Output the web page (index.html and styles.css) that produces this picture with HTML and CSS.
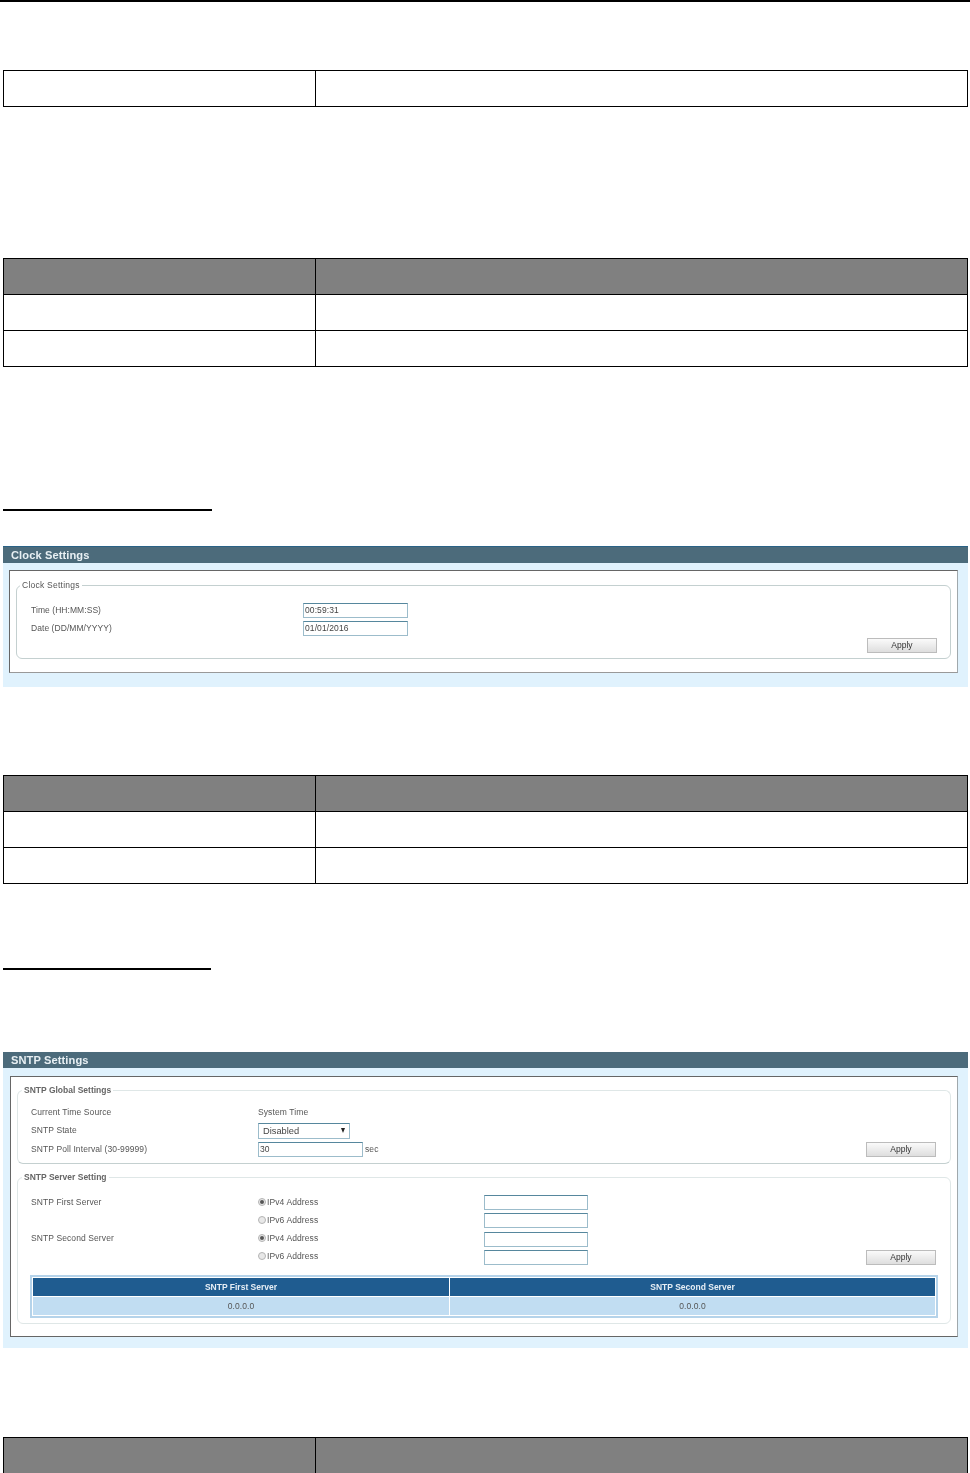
FILE: index.html
```html
<!DOCTYPE html>
<html lang="en">
<head>
<meta charset="utf-8">
<title>Clock and SNTP Settings</title>
<link rel="stylesheet" href="styles.css">
</head>
<body>
<div class="rule"></div>

<table class="doc doc-1"><tr><td class="c1"></td><td></td></tr></table>

<table class="doc doc-2">
  <tr class="head"><td class="c1"></td><td></td></tr>
  <tr><td class="c1"></td><td></td></tr>
  <tr><td class="c1"></td><td></td></tr>
</table>

<div class="underline ul-1"></div>

<section class="panel panel-clock">
  <h2 class="title">Clock Settings</h2>
  <div class="box">
    <div class="fs">
      <span class="legend">Clock Settings</span>
      <div class="clock-grid">
        <span>Time (HH:MM:SS)</span>
        <input class="field w105" value="00:59:31">
        <span>Date (DD/MM/YYYY)</span>
        <input class="field w105" value="01/01/2016">
        <button class="apply clock-apply">Apply</button>
      </div>
    </div>
  </div>
</section>

<table class="doc doc-3">
  <tr class="head"><td class="c1"></td><td></td></tr>
  <tr><td class="c1"></td><td></td></tr>
  <tr><td class="c1"></td><td></td></tr>
</table>

<div class="underline ul-2"></div>

<section class="panel panel-sntp">
  <h2 class="title">SNTP Settings</h2>
  <div class="box">
    <div class="fs fs-global">
      <span class="legend strong">SNTP Global Settings</span>
      <div class="global-grid">
        <span>Current Time Source</span>
        <span>System Time</span>
        <span></span>
        <span>SNTP State</span>
        <div class="select"><span>Disabled</span><i class="arrow"></i></div>
        <span></span>
        <span>SNTP Poll Interval (30-99999)</span>
        <div class="inline"><input class="field w105" value="30"><span>sec</span></div>
        <button class="apply">Apply</button>
      </div>
    </div>
    <div class="fs fs-server">
      <span class="legend strong">SNTP Server Setting</span>
      <div class="server-grid">
        <span>SNTP First Server</span>
        <label class="radio"><i class="dot on"></i>IPv4 Address</label>
        <input class="field w104">
        <span></span>
        <span></span>
        <label class="radio"><i class="dot"></i>IPv6 Address</label>
        <input class="field w104">
        <span></span>
        <span>SNTP Second Server</span>
        <label class="radio"><i class="dot on"></i>IPv4 Address</label>
        <input class="field w104">
        <span></span>
        <span></span>
        <label class="radio"><i class="dot"></i>IPv6 Address</label>
        <input class="field w104">
        <button class="apply">Apply</button>
      </div>
      <div class="servers-wrap">
        <table class="servers">
          <tr><th>SNTP First Server</th><th>SNTP Second Server</th></tr>
          <tr><td>0.0.0.0</td><td>0.0.0.0</td></tr>
        </table>
      </div>
    </div>
  </div>
</section>

<table class="doc doc-4"><tr class="head"><td class="c1"></td><td></td></tr></table>
</body>
</html>
```

FILE: styles.css
```css
* { box-sizing: border-box; }
html, body { margin: 0; padding: 0; background: #fff; }
body {
  width: 970px;
  height: 1473px;
  overflow: hidden;
  padding: 0 2px 0 3px;
  font-family: "Liberation Sans", Arial, sans-serif;
  font-size: 8.5px;
  letter-spacing: .1px;
  color: #555;
}
.rule { height: 2px; margin: 0 -2px 0 -3px; background: #000; }

/* empty document tables */
.doc { width: 965px; border-collapse: collapse; table-layout: fixed; }
.doc td { height: 36px; padding: 0; border: 1px solid #000; }
.doc .c1 { width: 312px; }
.doc .head td { background: #808080; }
.doc-1 { margin-top: 68px; }
.doc-2 { margin-top: 151px; }
.doc-3 { margin-top: 88px; }
.doc-4 { margin-top: 89px; }

.underline { height: 2px; background: #000; }
.ul-1 { width: 209px; margin-top: 142px; }
.ul-2 { width: 208px; margin-top: 84px; }

/* panels */
.panel { background: #e0f2fd; filter: blur(.3px); }
.panel-clock { height: 141px; margin-top: 35px; }
.panel-sntp { height: 296px; margin-top: 82px; }
.title {
  margin: 0;
  background: #4c6b7b;
  border-top: 1px solid #2a6286;
  color: #e8f0f4;
  font-size: 11.1px;
  font-weight: bold;
  line-height: 16px;
  height: 17px;
  padding-left: 8px;
}
.panel-sntp .title { height: 16px; border-top: 0; line-height: 17px; }
.box {
  background: #fff;
  border: 1px solid #666;
  border-right-color: #a0a8ac;
  display: flex;
  flex-direction: column;
}
.panel-clock .box { margin: 7px 10px 0 6px; height: 103px; padding: 14px 6px 0; border-bottom-color: #999; }
.panel-sntp .box { margin: 8px 10px 0 7px; height: 261px; padding: 13px 6px 0; row-gap: 13px; }

.fs {
  position: relative;
  border: 1px solid #c4d0d0;
  border-radius: 6px;
}
.panel-sntp .fs { border-top-color: #dfe7e7; border-left-color: #dfe7e7; border-right-color: #dfe7e7; }
.fs-server { border-bottom-color: #dfe7e7; }
.legend {
  position: absolute;
  left: 3px;
  top: -6px;
  padding: 0 2px;
  background: #fff;
  line-height: 11px;
  letter-spacing: .25px;
}
.legend.strong { left: 4px; font-weight: bold; color: #666; letter-spacing: 0; }

.clock-grid {
  display: grid;
  grid-template-columns: 272px 1fr;
  grid-auto-rows: 15px;
  row-gap: 3px;
  align-items: center;
  height: 72px;
  padding: 17px 13px 0 14px;
  letter-spacing: .06px;
}
.clock-grid > span, .global-grid > span, .server-grid > span, .radio { padding-bottom: 2px; }
.clock-apply { grid-column: 1 / 3; justify-self: end; margin-top: -2px; }

.fs-global { height: 74px; }
.global-grid {
  display: grid;
  grid-template-columns: 227px 1fr 70px;
  grid-template-rows: 14px 16px 15px;
  row-gap: 3.5px;
  align-items: center;
  padding: 14px 14px 0 13px;
}
.global-grid > span:first-child, .global-grid > span:nth-child(2) { padding-bottom: 0; }
.inline > span { padding-bottom: 1px; }
.fs-server { height: 147px; padding: 17px 12px 0; }
.server-grid {
  display: grid;
  grid-template-columns: 227px 226px 104px 1fr;
  grid-auto-rows: 15px;
  row-gap: 3.3px;
  align-items: center;
  padding: 0 2px 0 1px;
}
.server-grid .apply { justify-self: end; }

.field {
  display: block;
  height: 15px;
  padding: 0 1px 1px;
  border: 1px solid #9cbccb;
  border-top-color: #56879d;
  border-radius: 0;
  background: #fff;
  font: 8.5px "Liberation Sans", Arial, sans-serif;
  letter-spacing: .1px;
  color: #444;
  outline: 0;
}
.w105 { width: 105px; }
.w104 { width: 104px; }
.inline { display: flex; align-items: center; column-gap: 2px; }
.select {
  display: flex;
  align-items: center;
  justify-content: space-between;
  width: 92px;
  height: 16px;
  padding: 0 4px;
  border: 1px solid #9cbccb;
  border-top-color: #56879d;
  font-size: 9.3px;
  letter-spacing: 0;
  color: #444;
}
.arrow {
  display: block;
  width: 0;
  height: 0;
  border-left: 2.5px solid transparent;
  border-right: 2.5px solid transparent;
  border-top: 5px solid #222;
}
.radio { display: flex; align-items: center; }
.dot {
  position: relative;
  display: block;
  width: 8px;
  height: 8px;
  margin-right: 1px;
  border: 1px solid #b4b4b4;
  border-radius: 50%;
  background: #e8e8e8;
}
.dot.on::after {
  content: "";
  position: absolute;
  left: 1px;
  top: 1px;
  width: 4px;
  height: 4px;
  border-radius: 50%;
  background: #555;
}
.apply {
  display: block;
  width: 70px;
  height: 15px;
  padding: 0 0 1px;
  border: 1px solid #bcbcbc;
  border-radius: 0;
  background: linear-gradient(#fafafa, #dedede);
  font: 8.5px "Liberation Sans", Arial, sans-serif;
  color: #333;
}
.servers-wrap { margin-top: 10px; border: 2px solid #b5d3ea; }
.servers { width: 100%; border-collapse: separate; border-spacing: 1px; background: #fff; table-layout: fixed; }
.servers th, .servers td { height: 18px; padding: 0; text-align: center; font-size: 8.5px; }
.servers th { background: #1f5c90; color: #e6eef5; font-weight: bold; letter-spacing: 0; }
.servers td { background: #c1ddf2; color: #555; }
.servers th:first-child, .servers td:first-child { width: 416px; }
```
